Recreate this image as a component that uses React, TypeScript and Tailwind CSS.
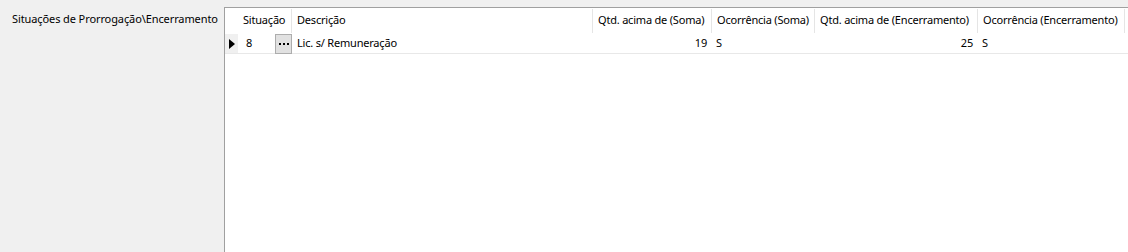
const cols = [
  { title: "Situação", w: "w-[54px]" },
  { title: "Descrição", w: "w-[301px]" },
  { title: "Qtd. acima de (Soma)", w: "w-[119px]" },
  { title: "Ocorrência (Soma)", w: "w-[103px]" },
  { title: "Qtd. acima de (Encerramento)", w: "w-[163px]" },
  { title: "Ocorrência (Encerramento)", w: "w-[147px]" },
]

export default function App() {
  return (
    <div
      className="flex w-[1128px] h-[252px] bg-[#f0f0f0] text-[11px] tracking-[-0.2px] text-black overflow-hidden"
      style={{ fontFamily: '"Segoe UI", "Noto Sans", sans-serif' }}
    >
      <div className="w-[224px] shrink-0 pl-[12px] pt-[11px] leading-[16px] whitespace-nowrap tracking-[-0.1px]">
        Situações de Prorrogação\Encerramento
      </div>
      <div className="flex-1 mt-[7px] border-l border-t border-[#a0a0a0] bg-white">
        {/* header */}
        <div className="flex h-[25px] items-center">
          <div className="w-[13px] self-stretch" />
          {cols.map((c) => (
            <div
              key={c.title}
              className={`${c.w} shrink-0 h-[24px] flex items-center pl-[5px] border-r border-[#e5e5e5] whitespace-nowrap`}
            >
              {c.title}
            </div>
          ))}
        </div>
        {/* data row */}
        <div className="flex h-[21px] items-center border-b border-[#e8e8e8] pt-[1px]">
          <div className="w-[13px] self-stretch bg-[#f0f0f0] flex items-center justify-center">
            <svg width="6" height="10" viewBox="0 0 6 10">
              <polygon points="0,0 6,5 0,10" fill="black" />
            </svg>
          </div>
          <div className="w-[54px] shrink-0 flex items-center justify-between self-stretch">
            <span className="pl-[8px]">8</span>
            <span className="w-[17px] h-[20px] bg-[#e1e1e1] border border-[#adadad] flex items-center justify-center gap-[2px]">
              <span className="w-[2px] h-[2px] bg-black" />
              <span className="w-[2px] h-[2px] bg-black" />
              <span className="w-[2px] h-[2px] bg-black" />
            </span>
          </div>
          <div className="w-[301px] shrink-0 pl-[5px] whitespace-nowrap">Lic. s/ Remuneração</div>
          <div className="w-[119px] shrink-0 text-right pr-[5px]">19</div>
          <div className="w-[103px] shrink-0 pl-[4px]">S</div>
          <div className="w-[163px] shrink-0 text-right pr-[5px]">25</div>
          <div className="w-[147px] shrink-0 pl-[4px]">S</div>
        </div>
      </div>
    </div>
  )
}
